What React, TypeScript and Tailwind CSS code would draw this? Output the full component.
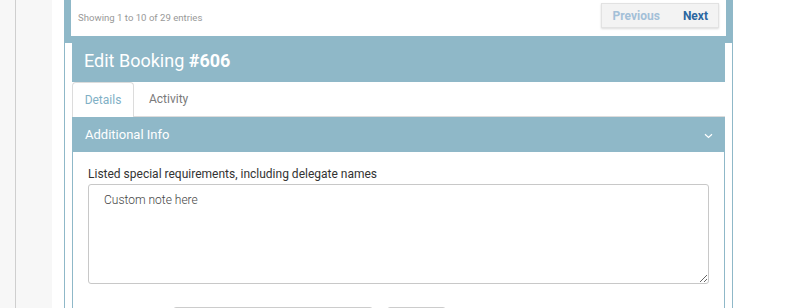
import React from "react";

const teal = "bg-[#8fb8c8]";

const TableFooter = () => (
  <div className="flex h-[36px] items-start justify-between bg-white pl-[7px] pr-[7px] pt-[3px]">
    <span className="mt-[9px] text-[9.6px] leading-[12px] text-[#999]">Showing 1 to 10 of 29 entries</span>
    <div className="flex h-[25px] items-center gap-[23px] border border-[#e2e2e2] bg-[#f3f3f3] pl-[11px] pr-[10px] shadow-[0_1px_2px_rgba(0,0,0,0.15)]">
      <span className="text-[12px] font-bold text-[#a3c0d8]">Previous</span>
      <span className="text-[12px] font-bold text-[#2b66a0]">Next</span>
    </div>
  </div>
);

const Tabs = () => (
  <div className="flex h-[35px] items-end border-b border-[#dcdcdc]">
    <div className="-mb-px flex h-[35px] w-[62px] items-center justify-center rounded-t-[4px] border border-b-0 border-[#dcdcdc] bg-white text-[12px] text-[#7fb0c6]">
      Details
    </div>
    <div className="flex h-[35px] items-center px-[15px] text-[12px] text-[#7a7a7a]">Activity</div>
  </div>
);

const AdditionalInfo = () => (
  <div className="border-x border-[#8fb8c8]">
    <div className={`flex h-[35px] items-center justify-between ${teal} pl-[12px] pr-[10px]`}>
      <span className="text-[13px] text-white">Additional Info</span>
      <svg width="9" height="6" viewBox="0 0 9 6" className="mr-[1px] mt-[2px]">
        <path d="M1 1.2 L4.5 4.5 L8 1.2" fill="none" stroke="white" strokeWidth="1.2" />
      </svg>
    </div>
    <div className="bg-white px-[15px] pt-[14px]">
      <label className="block text-[12px] leading-[17px] text-[#333]">
        Listed special requirements, including delegate names
      </label>
      <textarea
        className="mt-[1px] block h-[100px] w-full resize-y rounded-[3px] border border-[#c8c8c8] px-[15px] pt-[6px] text-[12px] font-light text-[#444] outline-none"
        defaultValue="Custom note here"
      />
      <div className="mt-[23px] flex pl-[85px]">
        <div className="h-[10px] w-[200px] rounded-t-[3px] border border-[#ccc]" />
        <div className="ml-[14px] h-[10px] w-[59px] rounded-t-[3px] border border-[#ccc]" />
      </div>
    </div>
  </div>
);

export default function App() {
  return (
    <div className="flex h-[308px] w-[787px] overflow-hidden bg-white font-['Roboto',sans-serif]">
      <div className="w-[15px] bg-[#f7f7f7]" />
      <div className="w-px bg-[#cfcfcf]" />
      <div className="w-[36px] bg-[#f7f7f7]" />
      <div className="w-[12px]" />
      <div className="flex w-[669px] flex-col">
        <div className={`${teal} px-[7px] pb-[7px]`}>
          <TableFooter />
        </div>
        <div className="flex-1 border-x border-[#8fb8c8] px-[7px]">
          <div className={`h-[39px] ${teal} pl-[12px] pt-[4px] text-[18px] leading-[28px] text-white`}>
            Edit Booking <span className="font-bold">#606</span>
          </div>
          <Tabs />
          <AdditionalInfo />
        </div>
      </div>
    </div>
  );
}
